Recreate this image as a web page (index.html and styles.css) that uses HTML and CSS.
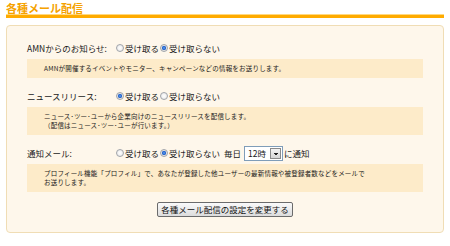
FILE: index.html
```html
<!DOCTYPE html>
<html lang="ja">
<head>
  <meta charset="UTF-8">
  <title>各種メール配信</title>
  <link rel="stylesheet" href="styles.css">
</head>
<body>
  <div class="section">
    <h2 class="section-title">各種メール配信</h2>
    <form class="panel" onsubmit="return false;">
      <div class="item">
        <div class="item-row">
          <span class="item-label">AMNからのお知らせ:</span>
          <label class="choice"><input type="radio" name="amn">受け取る</label>
          <label class="choice"><input type="radio" name="amn" checked>受け取らない</label>
        </div>
        <p class="item-note">AMNが開催するイベントやモニター、キャンペーンなどの情報をお送りします。</p>
      </div>

      <div class="item">
        <div class="item-row">
          <span class="item-label">ニュースリリース:</span>
          <label class="choice"><input type="radio" name="news" checked>受け取る</label>
          <label class="choice"><input type="radio" name="news">受け取らない</label>
        </div>
        <p class="item-note">ニュース･ツー･ユーから企業向けのニュースリリースを配信します。<br>（配信はニュース･ツー･ユーが行います。）</p>
      </div>

      <div class="item">
        <div class="item-row">
          <span class="item-label">通知メール:</span>
          <label class="choice"><input type="radio" name="notify">受け取る</label>
          <label class="choice"><input type="radio" name="notify" checked>受け取らない</label>
          <span class="every">毎日</span>
          <span class="select-wrap">
            <select class="hour">
              <option>12時</option>
            </select>
          </span>
          <span>に通知</span>
        </div>
        <p class="item-note">プロフィール機能「プロフィル」で、あなたが登録した他ユーザーの最新情報や被登録者数などをメールで<br>お送りします。</p>
      </div>

      <div class="actions">
        <button type="submit" class="submit">各種メール配信の設定を変更する</button>
      </div>
    </form>
  </div>
</body>
</html>
```

FILE: styles.css
```css
body {
  margin: 0;
  background: #fff;
  font-family: "Noto Sans CJK JP", "DejaVu Sans", sans-serif;
  color: #1a1a1a;
}

.section {
  padding: 1px 6px 0 6px;
}

.section-title {
  margin: 0;
  padding-top: 1px;
  font-size: 11px;
  line-height: 13px;
  font-weight: bold;
  color: #f5a200;
  border-bottom: 3px solid #ffab00;
  box-shadow: 0 -1px 0 #ffd980 inset;
}

.panel {
  margin: 7px 0 0 0;
  padding: 15px 20px 15px 20px;
  background: #fef7eb;
  border: 1px solid #f0ddb5;
  border-radius: 4px;
}

.item + .item {
  margin-top: 11px;
}

.item-row {
  display: flex;
  align-items: center;
  height: 14px;
  font-size: 8.5px;
}

.item-label {
  width: 89px;
  flex-shrink: 0;
}

.choice {
  display: flex;
  align-items: center;
  margin-right: 1px;
}

.choice input {
  appearance: none;
  width: 8px;
  height: 8px;
  margin: 0 1px 0 0;
  border: 1px solid #a0a4aa;
  border-radius: 50%;
  background: radial-gradient(circle, #ffffff 0%, #e4e4e4 100%);
}

.choice input:checked {
  background: radial-gradient(circle, #5aa0f0 0%, #2560c8 45%, #e8e8e8 55%, #d6d6d6 100%);
}

.every {
  margin: 0 3px 0 3px;
}

.select-wrap {
  position: relative;
  display: inline-block;
  height: 15px;
  margin-right: 1px;
}

.hour {
  appearance: none;
  display: block;
  height: 15px;
  width: 39px;
  margin: 0;
  padding: 0 0 0 3px;
  font-family: inherit;
  font-size: 8.5px;
  color: #1a1a1a;
  border: 1px solid #7f9db9;
  border-radius: 0;
  background: #fff;
}

/* the little arrow button of the dropdown */
.select-wrap::after {
  content: "";
  position: absolute;
  top: 2px;
  right: 2px;
  width: 11px;
  height: 11px;
  box-sizing: border-box;
  border: 1px solid #8a8a8a;
  background:
    linear-gradient(45deg, transparent 50%, #222 50%) 3px 4px / 2px 3px no-repeat,
    linear-gradient(-45deg, transparent 50%, #222 50%) 5px 4px / 2px 3px no-repeat,
    linear-gradient(#f4f4f4, #d4d4d4);
  pointer-events: none;
}

.item-note {
  margin: 4px 0 0 0;
  padding: 5px 17px;
  background: #fdebc9;
  font-size: 6.5px;
  line-height: 9px;
  letter-spacing: 0.2px;
}

.actions {
  display: flex;
  justify-content: center;
  margin-top: 10px;
}

.submit {
  height: 15px;
  padding: 0 3px;
  font-family: inherit;
  font-size: 8.5px;
  line-height: 13px;
  color: #111;
  background: linear-gradient(#fafafa, #dcdcdc);
  border: 1px solid #6b6b6b;
  border-radius: 2px;
}
```
